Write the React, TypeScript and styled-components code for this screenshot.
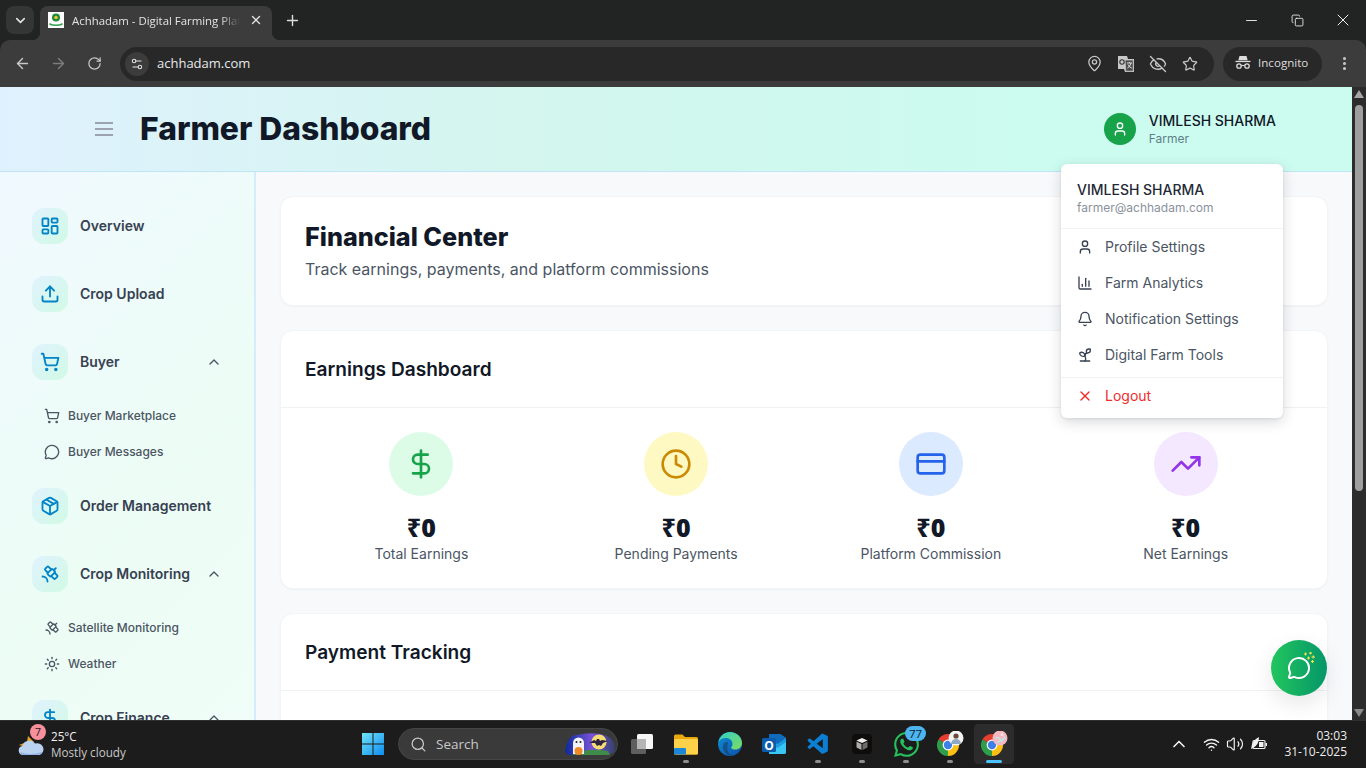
import React from "react";
import styled, { createGlobalStyle } from "styled-components";
import {
  ArrowLeft, ArrowRight, BarChart3, Bell, ChevronDown, ChevronUp, Clock, CreditCard, DollarSign,
  EyeOff, LayoutDashboard, MapPin, MessageCircle, Minus, Package, Plus, RotateCw, Satellite, Search,
  Settings2, ShoppingCart, Sprout, Star, Sun, TrendingUp, Upload, User, Volume2, Wifi, X,
  EllipsisVertical, Copy,
} from "lucide-react";
import { SiWhatsapp } from "react-icons/si";
import { VscVscode } from "react-icons/vsc";

const GlobalStyle = createGlobalStyle`
  html, body { margin: 0; padding: 0; height: 100%; overflow: hidden; background: #1c1c1c; }
  * { box-sizing: border-box; }
  body { font-family: Inter, "Liberation Sans", sans-serif; }
`;

const Screen = styled.div`
  width: 1366px; height: 768px; display: flex; flex-direction: column; overflow: hidden; background: #222323;
`;

/* ---------- browser chrome ---------- */
const TabStrip = styled.div`
  height: 40px; display: flex; align-items: flex-end; position: relative; flex: none;
`;
const TabList = styled.div`
  width: 28px; height: 28px; margin: 0 6px 6px 6px; border-radius: 8px; background: #343535; color: #e3e3e3;
  display: flex; align-items: center; justify-content: center;
`;
const ActiveTab = styled.div`
  width: 232px; height: 34px; background: #3c3c3c; border-radius: 8px 8px 0 0; display: flex; align-items: center;
  padding: 0 8px 6px; color: #e3e3e3; position: relative;
  &::before, &::after { content: ""; position: absolute; bottom: 0; width: 8px; height: 8px; }
  &::before { left: -8px; background: radial-gradient(circle at 0 0, transparent 8px, #3c3c3c 8.5px); }
  &::after { right: -8px; background: radial-gradient(circle at 100% 0, transparent 8px, #3c3c3c 8.5px); }
`;
const Favicon = styled.svg`
  width: 16px; height: 16px; margin-right: 8px; flex: none;
`;
const TabTitle = styled.span`
  flex: 1; white-space: nowrap; overflow: hidden; font: 11.4px "Open Sans", "Noto Sans", sans-serif;
  -webkit-mask-image: linear-gradient(90deg, #000 88%, transparent 100%);
  mask-image: linear-gradient(90deg, #000 88%, transparent 100%);
`;
const TabClose = styled.div`
  width: 16px; height: 16px; margin-left: 8px; display: flex; align-items: center; justify-content: center; color: #e3e3e3;
`;
const NewTab = styled.div`
  width: 40px; height: 28px; margin-bottom: 6px; display: flex; align-items: center; justify-content: center; color: #dcdcdc;
`;
const WindowControls = styled.div`
  margin-left: auto; height: 40px; display: flex; align-items: center; color: #f0f0f0;
`;
const WindowButton = styled.div`
  width: 46px; height: 40px; display: flex; align-items: center; justify-content: center;
`;

const Toolbar = styled.div`
  height: 47px; background: #3c3c3c; display: flex; align-items: center; padding: 0 4px; flex: none; border-radius: 10px 10px 0 0;
`;
const NavButton = styled.div<{ $dim?: boolean }>`
  width: 36px; height: 34px; display: flex; align-items: center; justify-content: center;
  color: ${(p) => (p.$dim ? "#7d7d7d" : "#c7c7c7")};
`;
const Omnibox = styled.div`
  margin-left: 8px; width: 1094px; height: 34px; border-radius: 17px; background: #282828; display: flex; align-items: center;
  padding: 0 8px 0 5px; color: #e3e3e3;
`;
const TuneChip = styled.div`
  width: 24px; height: 24px; border-radius: 50%; background: #3c3c3c; display: flex; align-items: center; justify-content: center; color: #e3e3e3;
`;
const Url = styled.span`
  margin-left: 8px; padding-bottom: 2px; font: 13px "Open Sans", "Noto Sans", sans-serif; color: #e6e8ea; flex: 1;
`;
const OmniIcon = styled.div`
  width: 32px; height: 32px; display: flex; align-items: center; justify-content: center; color: #c7c7c7;
`;
const IncognitoPill = styled.div`
  margin-left: 9px; width: 99px; height: 34px; border-radius: 17px; background: #282828; display: flex; align-items: center;
  padding: 0 0 2px 12px; gap: 7px; color: #dcdcdc; font: 11.6px "Open Sans", "Noto Sans", sans-serif;
`;
const MenuDots = styled.div`
  margin-left: 4px; width: 36px; height: 34px; display: flex; align-items: center; justify-content: center; color: #c7c7c7;
`;

/* ---------- page ---------- */
const Viewport = styled.div`
  height: 633px; display: flex; flex: none; overflow: hidden;
`;
const Page = styled.div`
  width: 1352px; height: 633px; display: flex; flex-direction: column; position: relative; overflow: hidden; background: #f8f9fb;
`;
const Scrollbar = styled.div`
  width: 14px; background: #2c2c2c; display: flex; flex-direction: column; align-items: center; padding-top: 3px;
`;
const ScrollArrow = styled.svg`
  width: 10px; height: 8px; flex: none;
`;
const ScrollThumb = styled.div`
  width: 8px; height: 386px; margin-top: 7px; background: #9f9f9f; border-radius: 4px; margin-bottom: auto;
`;
const ScrollArrowDown = styled(ScrollArrow)`
  margin-bottom: 3px;
`;

const Header = styled.header`
  height: 85px; flex: none; display: flex; align-items: center; padding: 0 76px 0 95px;
  background: linear-gradient(90deg, #dff1fe 0%, #d3f6ee 40%, #ccfbef 75%, #ccfbf0 100%);
  border-bottom: 1px solid #bfe4f3;
`;
const Burger = styled.div`
  width: 18px; height: 14px; display: flex; flex-direction: column; justify-content: space-between;
`;
const BurgerBar = styled.span`
  display: block; height: 2px; background: #9ca3af;
`;
const Title = styled.h1`
  margin: 0 0 0 27px; font: 800 31.8px/40px Inter, sans-serif; color: #111827;
`;
const HeaderUser = styled.div`
  margin-left: auto; display: flex; align-items: center; gap: 13px;
`;
const Avatar = styled.div`
  width: 32px; height: 32px; border-radius: 50%; background: #16a34a; color: #fff; display: flex; align-items: center; justify-content: center;
`;
const UserText = styled.div`
  display: flex; flex-direction: column;
`;
const UserName = styled.div`
  font: 500 14px/20px Inter, sans-serif; color: #111827;
`;
const UserRole = styled.div`
  font: 400 12px/16px Inter, sans-serif; color: #5f7f88;
`;

const Body = styled.div`
  flex: 1; display: flex; min-height: 0;
`;
const Sidebar = styled.aside`
  width: 256px; flex: none; padding: 20px 32px 0; overflow: hidden;
  background: linear-gradient(135deg, #f0f9ff 0%, #ecfdf5 60%, #f0fdf8 100%);
  border-right: 2px solid #d5ecfb;
`;
const NavRow = styled.div`
  height: 68px; display: flex; align-items: center; gap: 12px; flex: none;
`;
const NavIcon = styled.div`
  width: 36px; height: 36px; border-radius: 12px; flex: none; display: flex; align-items: center; justify-content: center;
  background: linear-gradient(135deg, #e0f2fe, #d1fae5); color: #0284c7;
`;
const NavLabel = styled.span`
  font: 600 14px/20px Inter, sans-serif; color: #374151; white-space: nowrap;
`;
const NavChevron = styled.div`
  margin-left: auto; display: flex; color: #4b5563;
`;
const SubList = styled.div`
  margin: 2px 0; display: flex; flex-direction: column;
`;
const SubRow = styled.div`
  height: 36px; padding-left: 12px; display: flex; align-items: center; gap: 8px; color: #4b5563;
  font: 500 12px/16px Inter, sans-serif; white-space: nowrap;
`;

const Main = styled.main`
  flex: 1; padding: 25px 25px 0; display: flex; flex-direction: column; gap: 26px; overflow: hidden;
`;
const Card = styled.section`
  background: #fff; border-radius: 12px; flex: none; box-shadow: 0 0 0 1px #f3f4f6, 0 1px 3px rgba(17, 24, 39, .07);
`;
const IntroCard = styled(Card)`
  height: 108px; padding: 24px;
`;
const PageTitle = styled.h2`
  margin: 0; font: 800 25.2px/32px Inter, sans-serif; color: #111827;
`;
const PageSub = styled.p`
  margin: 4px 0 0; font: 400 16px/24px Inter, sans-serif; color: #4b5563;
`;
const CardHead = styled.div`
  height: 77px; padding: 0 24px; display: flex; align-items: center; border-bottom: 1px solid #f0f1f3;
`;
const CardTitle = styled.h3`
  margin: 0; font: 600 19.1px/28px Inter, sans-serif; color: #111827;
`;
const StatGrid = styled.div`
  padding: 24px 25px 24px 24px; display: grid; grid-template-columns: repeat(4, 1fr); column-gap: 22px;
`;
const Stat = styled.div`
  display: flex; flex-direction: column; align-items: center;
`;
const tones = {
  green: ["#dcfce7", "#16a34a"], yellow: ["#fef9c3", "#ca8a04"], blue: ["#dbeafe", "#2563eb"], purple: ["#f3e8ff", "#9333ea"],
} as const;
type Tone = keyof typeof tones;
const StatIcon = styled.div<{ $tone: Tone }>`
  width: 64px; height: 64px; border-radius: 50%; display: flex; align-items: center; justify-content: center;
  background: ${(p) => tones[p.$tone][0]}; color: ${(p) => tones[p.$tone][1]};
`;
const StatValue = styled.div`
  margin-top: 15px; font: 800 25px/32px "Open Sans", "Noto Sans", sans-serif; color: #111827;
`;
const StatLabel = styled.div`
  margin-top: 1px; font: 400 14px/20px Inter, sans-serif; color: #4b5563;
`;
const TrackCard = styled(Card)`
  height: 300px;
`;

const Dropdown = styled.div`
  position: absolute; top: 77px; right: 69px; width: 222px; height: 254px; background: #fff; border-radius: 6px;
  box-shadow: 0 4px 14px rgba(17, 24, 39, .16), 0 1px 3px rgba(17, 24, 39, .08); z-index: 5;
`;
const DropHead = styled.div`
  height: 65px; padding: 16px 16px 0; border-bottom: 1px solid #f1f2f4;
`;
const DropName = styled.div`
  font: 500 14px/20px Inter, sans-serif; color: #1f2937;
`;
const DropMail = styled.div`
  font: 400 12px/16px Inter, sans-serif; color: #8a919c;
`;
const DropItem = styled.div<{ $danger?: boolean }>`
  height: 36px; padding: 0 16px; display: flex; align-items: center; gap: 12px;
  font: 400 14px/20px Inter, sans-serif; color: ${(p) => (p.$danger ? "#ef2b2d" : "#4b5563")};
`;
const DropIcon = styled.span<{ $danger?: boolean }>`
  display: flex; color: ${(p) => (p.$danger ? "#ef2b2d" : "#374151")};
`;
const DropRule = styled.div`
  height: 1px; margin-top: 4px; background: #f1f2f4;
`;
const Fab = styled.div`
  position: absolute; right: 25px; bottom: 24px; width: 56px; height: 56px; border-radius: 50%; color: #fff;
  background: linear-gradient(90deg, #22c55e, #059669); display: flex; align-items: center; justify-content: center;
  box-shadow: 0 8px 22px rgba(17, 24, 39, .1); z-index: 4;
`;
const FabSpark = styled.svg`
  position: absolute; top: 12px; right: 11px; width: 14px; height: 12px;
`;

/* ---------- taskbar ---------- */
const Taskbar = styled.footer`
  height: 48px; flex: none; background: #1c1c1c; border-top: 1px solid #303030; display: flex; align-items: center; padding: 0 0 1px 18px; color: #fff;
`;
const Weather = styled.div`
  width: 333px; display: flex; align-items: center; gap: 6px; position: relative;
`;
const WeatherBadge = styled.span`
  position: absolute; left: 12px; top: -4px; width: 16px; height: 16px; border-radius: 50%; background: #f7909a; color: #1c1c1c;
  font: 11px/16px "Open Sans", sans-serif; text-align: center;
`;
const WeatherText = styled.div`
  font: 11.7px/16px "Open Sans", "Noto Sans", sans-serif; color: #f2f2f2;
`;
const WeatherSub = styled.div`
  color: #c8c8c8;
`;
const TaskSlot = styled.div<{ $active?: boolean }>`
  width: 44px; height: 40px; padding: 0 2px; display: flex; align-items: center; justify-content: center; position: relative; flex: none; border-radius: 5px;
  background: ${(p) => (p.$active ? "#2c2c2c" : "transparent")}; background-clip: content-box;
`;
const RunDot = styled.span<{ $active?: boolean }>`
  position: absolute; bottom: 1px; left: 50%; transform: translateX(-50%); height: 3px; border-radius: 2px;
  width: ${(p) => (p.$active ? "16px" : "6px")};
  background: ${(p) => (p.$active ? "#4cc2ff" : "#8e8e8e")};
`;
const TaskBadge = styled.span`
  position: absolute; top: 2px; right: 2px; min-width: 21px; height: 15px; border-radius: 8px; background: #4cb4ee; color: #10222e;
  font: 11.5px/15px "Open Sans", sans-serif; text-align: center; padding: 0 3px;
`;
const SearchBox = styled.div`
  margin: 0 2px 0 3px; width: 220px; height: 32px; border-radius: 16px; background: #3a3a3a; border: 1px solid #454545; display: flex;
  align-items: center; padding-left: 11px; color: #c9c9c9; font: 13.5px "Open Sans", "Noto Sans", sans-serif; gap: 9px; flex: none;
`;
const SearchArt = styled.svg`
  width: 52px; height: 28px; margin-left: auto; margin-right: 1px; flex: none;
`;
const Tray = styled.div`
  margin-left: auto; display: flex; align-items: center; padding-right: 19px; color: #f0f0f0;
`;
const TrayIcon = styled.div<{ $w: number }>`
  width: ${(p) => p.$w}px; display: flex; justify-content: center;
`;
const Clockbox = styled.div`
  margin-left: 13px; text-align: right; font: 12px/16px "Open Sans", "Noto Sans", sans-serif; color: #eee;
`;

/* ---------- drawings ---------- */
const ChromeLogo = () => (
  <g transform="translate(0 2)">
    <path d="M12 12 2.47 6.5A11 11 0 0 1 21.53 6.5Z" fill="#e53d30" />
    <path d="M12 12 21.53 6.5A11 11 0 0 1 12 23Z" fill="#fbc012" />
    <path d="M12 12 12 23A11 11 0 0 1 2.47 6.5Z" fill="#2f9e4c" />
    <circle cx="12" cy="12" r="5.4" fill="#fff" />
    <circle cx="12" cy="12" r="4.2" fill="#3f7fe8" />
  </g>
);
const ChromePerson = () => (
  <svg width="28" height="26" viewBox="0 0 28 26">
    <ChromeLogo />
    <circle cx="20" cy="7" r="7.5" fill="#f4f4f4" />
    <circle cx="20" cy="5" r="2.6" fill="#6b4a3a" />
    <path d="M15 13a5 5 0 0 1 10 0Z" fill="#8fa9c2" />
  </svg>
);
const ChromePink = () => (
  <svg width="28" height="26" viewBox="0 0 28 26">
    <ChromeLogo />
    <circle cx="20" cy="7" r="7.5" fill="#f4b8c0" />
    <path d="M15 8q3-3 5 0t5-2M17 12q3-3 6-2" stroke="#bfe3e6" strokeWidth="1.600" fill="none" />
    <circle cx="22" cy="3.500" r="1.500" fill="#fbe0e3" />
  </svg>
);

const stats: { tone: Tone; icon: React.ReactNode; label: string }[] = [
  { tone: "green", icon: <DollarSign size={32} />, label: "Total Earnings" },
  { tone: "yellow", icon: <Clock size={32} />, label: "Pending Payments" },
  { tone: "blue", icon: <CreditCard size={32} />, label: "Platform Commission" },
  { tone: "purple", icon: <TrendingUp size={32} />, label: "Net Earnings" },
];

const navStroke = 2.2;

export default function App() {
  return (
    <Screen>
      <GlobalStyle />
      <TabStrip>
        <TabList><ChevronDown size={15} strokeWidth={2.5} /></TabList>
        <ActiveTab>
          <Favicon viewBox="0 0 16 16">
            <rect width="16" height="16" fill="#fff" />
            <circle cx="8" cy="5.5" r="4" fill="#1d8a3a" />
            <circle cx="8" cy="5.5" r="1.8" fill="#f2c230" />
            <path d="M1.5 11q6.5 3 13 0v2q-6.5 2-13 0Z" fill="#2f9e4c" />
          </Favicon>
          <TabTitle>Achhadam - Digital Farming Platform</TabTitle>
          <TabClose><X size={14} strokeWidth={2.2} /></TabClose>
        </ActiveTab>
        <NewTab><Plus size={17} strokeWidth={2} /></NewTab>
        <WindowControls>
          <WindowButton><Minus size={17} strokeWidth={1.3} /></WindowButton>
          <WindowButton><Copy size={13} strokeWidth={1.6} /></WindowButton>
          <WindowButton><X size={20} strokeWidth={1.2} /></WindowButton>
        </WindowControls>
      </TabStrip>

      <Toolbar>
        <NavButton><ArrowLeft size={17} strokeWidth={2} /></NavButton>
        <NavButton $dim><ArrowRight size={17} strokeWidth={2} /></NavButton>
        <NavButton><RotateCw size={15} strokeWidth={2} /></NavButton>
        <Omnibox>
          <TuneChip><Settings2 size={14} strokeWidth={1.8} /></TuneChip>
          <Url>achhadam.com</Url>
          <OmniIcon><MapPin size={17} strokeWidth={1.8} /></OmniIcon>
          <OmniIcon>
            <svg width="18" height="18" viewBox="0 0 18 18">
              <path d="M1 1h9l1 3h6v13H8l-1-3H1Z" fill="#c7c7c7" />
              <path d="M8 5h8.2v11.2H8.8Z" fill="#4a4a4a" stroke="#c7c7c7" strokeWidth=".8" />
              <path d="M10 8h5M12.5 7v1M14 8q-1 4-3.6 5M11 9.5q1.4 3 3.8 3.6" stroke="#ddd" fill="none" strokeWidth="1" />
              <circle cx="5" cy="7" r="2.2" fill="none" stroke="#333" strokeWidth="1.1" />
            </svg>
          </OmniIcon>
          <OmniIcon><EyeOff size={18} strokeWidth={1.8} /></OmniIcon>
          <OmniIcon><Star size={16} strokeWidth={1.8} /></OmniIcon>
        </Omnibox>
        <IncognitoPill>
          <svg width="16" height="15" viewBox="0 0 16 15">
            <path d="M4.500 1h7l1.200 4.200H3.300Z" fill="#dcdcdc" />
            <rect x="0.500" y="5.800" width="15" height="1.300" fill="#dcdcdc" />
            <circle cx="4" cy="11" r="2.200" fill="none" stroke="#dcdcdc" strokeWidth="1.300" />
            <circle cx="12" cy="11" r="2.200" fill="none" stroke="#dcdcdc" strokeWidth="1.300" />
            <path d="M6.200 10.500h3.600" stroke="#dcdcdc" strokeWidth="1.100" />
          </svg>
          <span>Incognito</span>
        </IncognitoPill>
        <MenuDots><EllipsisVertical size={17} strokeWidth={2.4} /></MenuDots>
      </Toolbar>

      <Viewport>
        <Page>
          <Header>
            <Burger><BurgerBar /><BurgerBar /><BurgerBar /></Burger>
            <Title>Farmer Dashboard</Title>
            <HeaderUser>
              <Avatar><User size={16} /></Avatar>
              <UserText>
                <UserName>VIMLESH SHARMA</UserName>
                <UserRole>Farmer</UserRole>
              </UserText>
            </HeaderUser>
          </Header>
          <Body>
            <Sidebar>
              <NavRow><NavIcon><LayoutDashboard size={20} strokeWidth={navStroke} /></NavIcon><NavLabel>Overview</NavLabel></NavRow>
              <NavRow><NavIcon><Upload size={20} strokeWidth={navStroke} /></NavIcon><NavLabel>Crop Upload</NavLabel></NavRow>
              <NavRow>
                <NavIcon><ShoppingCart size={20} strokeWidth={navStroke} /></NavIcon><NavLabel>Buyer</NavLabel>
                <NavChevron><ChevronUp size={16} /></NavChevron>
              </NavRow>
              <SubList>
                <SubRow><ShoppingCart size={16} />Buyer Marketplace</SubRow>
                <SubRow><MessageCircle size={16} />Buyer Messages</SubRow>
              </SubList>
              <NavRow><NavIcon><Package size={20} strokeWidth={navStroke} /></NavIcon><NavLabel>Order Management</NavLabel></NavRow>
              <NavRow>
                <NavIcon><Satellite size={20} strokeWidth={navStroke} /></NavIcon><NavLabel>Crop Monitoring</NavLabel>
                <NavChevron><ChevronUp size={16} /></NavChevron>
              </NavRow>
              <SubList>
                <SubRow><Satellite size={16} />Satellite Monitoring</SubRow>
                <SubRow><Sun size={16} />Weather</SubRow>
              </SubList>
              <NavRow>
                <NavIcon><DollarSign size={20} strokeWidth={navStroke} /></NavIcon><NavLabel>Crop Finance</NavLabel>
                <NavChevron><ChevronUp size={16} /></NavChevron>
              </NavRow>
            </Sidebar>
            <Main>
              <IntroCard>
                <PageTitle>Financial Center</PageTitle>
                <PageSub>Track earnings, payments, and platform commissions</PageSub>
              </IntroCard>
              <Card>
                <CardHead><CardTitle>Earnings Dashboard</CardTitle></CardHead>
                <StatGrid>
                  {stats.map((s) => (
                    <Stat key={s.label}>
                      <StatIcon $tone={s.tone}>{s.icon}</StatIcon>
                      <StatValue>₹0</StatValue>
                      <StatLabel>{s.label}</StatLabel>
                    </Stat>
                  ))}
                </StatGrid>
              </Card>
              <TrackCard>
                <CardHead><CardTitle>Payment Tracking</CardTitle></CardHead>
              </TrackCard>
            </Main>
          </Body>

          <Dropdown>
            <DropHead>
              <DropName>VIMLESH SHARMA</DropName>
              <DropMail>farmer@achhadam.com</DropMail>
            </DropHead>
            <DropItem><DropIcon><User size={16} /></DropIcon>Profile Settings</DropItem>
            <DropItem><DropIcon><BarChart3 size={16} /></DropIcon>Farm Analytics</DropItem>
            <DropItem><DropIcon><Bell size={16} /></DropIcon>Notification Settings</DropItem>
            <DropItem><DropIcon><Sprout size={16} /></DropIcon>Digital Farm Tools</DropItem>
            <DropRule />
            <DropItem $danger><DropIcon $danger><X size={16} /></DropIcon>Logout</DropItem>
          </Dropdown>

          <Fab>
            <MessageCircle size={24} />
            <FabSpark viewBox="0 0 14 12">
              <path d="M2 2h3M3.500.5v3M7 1h3M8.500 0v2.500M9.500 5h3.500M11.200 3.500v3M5 6h3M6.500 4.500v3M9 9.500h3M10.500 8v3" stroke="#f2e34a" strokeWidth="1.200" fill="none" />
            </FabSpark>
          </Fab>
        </Page>
        <Scrollbar>
          <ScrollArrow viewBox="0 0 10 8"><path d="M5 0 10 8H0Z" fill="#a6a6a6" /></ScrollArrow>
          <ScrollThumb />
          <ScrollArrowDown viewBox="0 0 10 8"><path d="M5 8 10 0H0Z" fill="#8a8a8a" /></ScrollArrowDown>
        </Scrollbar>
      </Viewport>

      <Taskbar>
        <Weather>
          <svg width="27" height="24" viewBox="0 0 27 24">
            <path d="M1 13 9 10l1-6 6 6-4 6Z" fill="#eea02a" />
            <path d="M5 23a4.6 4.6 0 0 1-.6-9.1A7 7 0 0 1 17 11.6 5.8 5.8 0 0 1 21.600 23Z" fill="#b9d2f2" />
            <path d="M2 20q10 4 22 0v1.500q-3 1.500-6 1.500H5q-2 0-3-3Z" fill="#8fb2e2" />
          </svg>
          <WeatherBadge>7</WeatherBadge>
          <WeatherText>25°C<WeatherSub>Mostly cloudy</WeatherSub></WeatherText>
        </Weather>
        <TaskSlot>
          <svg width="24" height="24" viewBox="0 0 24 24">
            <defs>
              <linearGradient id="win" x1="0" y1="0" x2="1" y2="1">
                <stop offset="0" stopColor="#6fe3f7" /><stop offset="1" stopColor="#0f8df0" />
              </linearGradient>
            </defs>
            <path d="M1 1h10.500v10.500H1ZM12.500 1H23v10.500H12.500ZM1 12.500h10.500V23H1ZM12.500 12.500H23V23H12.500Z" fill="url(#win)" />
          </svg>
        </TaskSlot>
        <SearchBox>
          <Search size={17} strokeWidth={1.8} />
          <span>Search</span>
          <SearchArt viewBox="0 0 52 28">
            <defs>
              <linearGradient id="nite" x1="0" y1="0" x2="1" y2="0">
                <stop offset="0" stopColor="#0c2a9a" /><stop offset=".55" stopColor="#7a54d8" /><stop offset="1" stopColor="#35406e" />
              </linearGradient>
            </defs>
            <path d="M1 22Q3 6 12 5 24 2 36 4 50 6 51 18 51 25 40 25H8Q2 25 1 22Z" fill="url(#nite)" />
            <path d="M8 25q14-8 36-4l2 4Z" fill="#3f8b4a" />
            <path d="M9 24V13a5.500 5.500 0 0 1 11 0v11Z" fill="#f3f3fb" />
            <circle cx="12.500" cy="12" r="1" fill="#222" /><circle cx="16.500" cy="12" r="1" fill="#222" />
            <circle cx="14.500" cy="21" r="4" fill="#ee8a25" />
            <circle cx="35" cy="12" r="7.500" fill="#f6dc74" />
            <path d="M25 13l5-3 2 1 1-2 2 0 1 2 2-1 6 1-5 2-2 3-2-1-2 1-2-3Z" fill="#2b2340" />
          </SearchArt>
        </SearchBox>
        <TaskSlot>
          <svg width="24" height="24" viewBox="0 0 24 24">
            <rect x="1" y="7" width="15" height="15" rx="1.500" fill="#5f5f5f" />
            <rect x="7" y="2" width="16" height="15" rx="1.500" fill="#f7f7f7" />
            <rect x="7" y="7" width="9" height="10" fill="#b5b5b5" />
          </svg>
        </TaskSlot>
        <TaskSlot>
          <svg width="26" height="24" viewBox="0 0 26 24">
            <path d="M1 4a1.500 1.500 0 0 1 1.500-1.500h7L12 5h11.500A1.500 1.500 0 0 1 25 6.500V21a1.500 1.500 0 0 1-1.500 1.500h-21A1.500 1.500 0 0 1 1 21Z" fill="#e9a80e" />
            <rect x="1" y="7" width="24" height="15.500" rx="1.500" fill="#fdd14a" />
            <rect x="1" y="16" width="12" height="6.500" rx="1" fill="#1c86d8" />
          </svg>
          <RunDot />
        </TaskSlot>
        <TaskSlot>
          <svg width="26" height="26" viewBox="0 0 26 26">
            <defs>
              <linearGradient id="edgeA" x1="0" y1="0" x2="1" y2="1">
                <stop offset="0" stopColor="#2fd0c8" /><stop offset="1" stopColor="#7fdb5f" />
              </linearGradient>
              <linearGradient id="edgeB" x1="0" y1="0" x2="1" y2="1">
                <stop offset="0" stopColor="#0f8fd8" /><stop offset="1" stopColor="#0c4fa8" />
              </linearGradient>
            </defs>
            <circle cx="13" cy="13" r="12" fill="url(#edgeB)" />
            <path d="M1.500 11C3 4.500 8 1 13 1c6.500 0 12 5 12 11 0 4-3 6.500-6.500 6.500-2.500 0-4.500-1-4.500-1.800 0-.7 1.500-1 1.500-3.700C15.500 9.500 12.500 7 9 7c-3.500 0-6 1.500-7.500 4Z" fill="url(#edgeA)" />
            <path d="M9 11c-3 1-4 5-2 9 1.500 3 5 5 9 4.500-4-1-5-3-5.500-6-.3-2 0-5 .5-7.500Z" fill="#1c1c1c" opacity=".35" />
          </svg>
        </TaskSlot>
        <TaskSlot>
          <svg width="26" height="26" viewBox="0 0 26 26">
            <path d="M8 3h11l6 4v14a2 2 0 0 1-2 2H8Z" fill="#1b9de2" />
            <path d="M8 3h11l6 4-8.500 6L8 8Z" fill="#0f6cbd" />
            <path d="M8 12l8.500 5L25 11v10a2 2 0 0 1-2 2H8Z" fill="#38c6f4" />
            <rect x="1" y="7" width="14" height="14" rx="1.500" fill="#0b5cad" />
            <text x="8" y="18.500" textAnchor="middle" fontFamily="Open Sans, sans-serif" fontSize="12" fontWeight="700" fill="#fff">O</text>
          </svg>
        </TaskSlot>
        <TaskSlot>
          <VscVscode size={25} color="#0b7fd4" />
          <RunDot />
        </TaskSlot>
        <TaskSlot>
          <svg width="24" height="24" viewBox="0 0 24 24">
            <rect x="2" y="2" width="20" height="20" rx="4" fill="#0e0d0b" />
            <path d="M12 6l5.500 2.500L12 11 6.500 8.500Z" fill="#f1f1f1" />
            <path d="M6.500 9.500 11.500 12v6l-5-2.500Z" fill="#aaa" />
            <path d="M17.500 9.500 12.500 12v6l5-2.500Z" fill="#6d6d6d" />
          </svg>
          <RunDot />
        </TaskSlot>
        <TaskSlot>
          <SiWhatsapp size={25} color="#25c05a" />
          <TaskBadge>77</TaskBadge>
          <RunDot />
        </TaskSlot>
        <TaskSlot>
          <ChromePerson />
          <RunDot />
        </TaskSlot>
        <TaskSlot $active>
          <ChromePink />
          <RunDot $active />
        </TaskSlot>
        <Tray>
          <TrayIcon $w={40}><ChevronUp size={20} strokeWidth={2} /></TrayIcon>
          <TrayIcon $w={24}><Wifi size={17} strokeWidth={2} /></TrayIcon>
          <TrayIcon $w={24}><Volume2 size={18} strokeWidth={1.6} /></TrayIcon>
          <TrayIcon $w={24}>
            <svg width="18" height="16" viewBox="0 0 18 16">
              <rect x="3" y="4.500" width="12" height="8" rx="1" fill="none" stroke="#f0f0f0" strokeWidth="1.200" />
              <rect x="15.500" y="7" width="1.500" height="3" fill="#f0f0f0" />
              <path d="M1 13Q2 4 9 1 9 9 3 12Z" fill="#f0f0f0" />
              <rect x="9" y="6" width="4.500" height="5" fill="#f0f0f0" />
            </svg>
          </TrayIcon>
          <Clockbox>03:03<br />31-10-2025</Clockbox>
        </Tray>
      </Taskbar>
    </Screen>
  );
}
